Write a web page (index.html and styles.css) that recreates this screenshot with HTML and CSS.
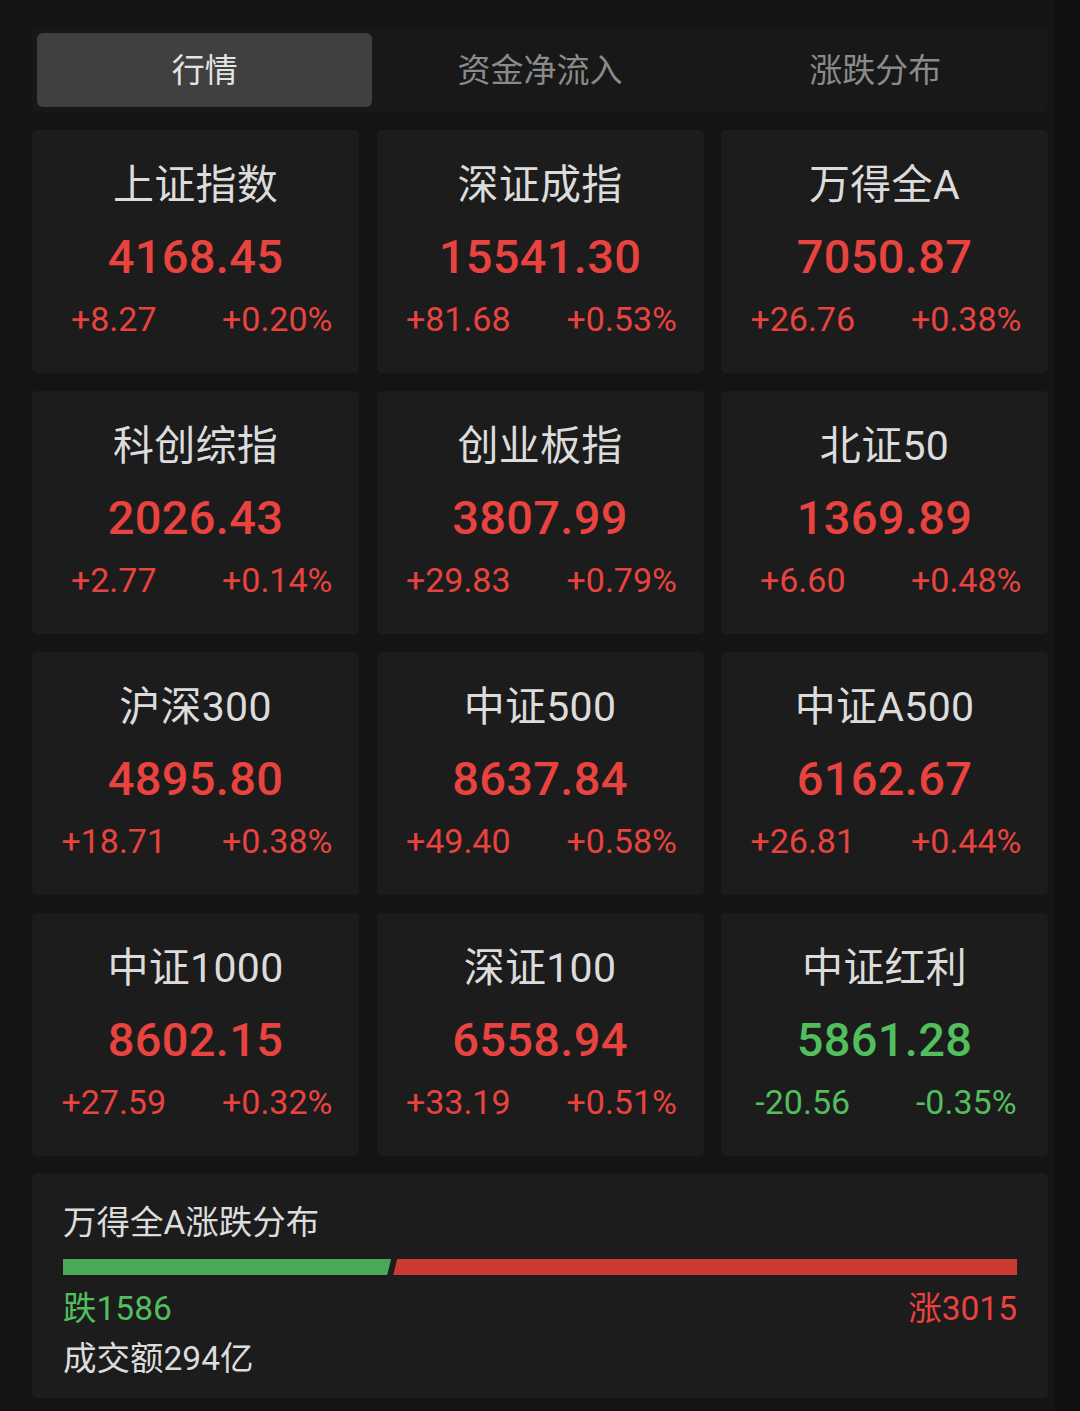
FILE: index.html
```html
<!DOCTYPE html>
<html lang="zh-CN">
<head>
<meta charset="utf-8">
<title>行情</title>
<link rel="stylesheet" href="styles.css">
</head>
<body>
<div class="page">
  <div class="tabs">
    <div class="tab active">行情</div>
    <div class="tab">资金净流入</div>
    <div class="tab">涨跌分布</div>
  </div>

  <div class="grid">
    <div class="card up">
      <div class="name">上证指数</div>
      <div class="price">4168.45</div>
      <div class="chg"><span>+8.27</span><span>+0.20%</span></div>
    </div>
    <div class="card up">
      <div class="name">深证成指</div>
      <div class="price">15541.30</div>
      <div class="chg"><span>+81.68</span><span>+0.53%</span></div>
    </div>
    <div class="card up">
      <div class="name">万得全A</div>
      <div class="price">7050.87</div>
      <div class="chg"><span>+26.76</span><span>+0.38%</span></div>
    </div>

    <div class="card up">
      <div class="name">科创综指</div>
      <div class="price">2026.43</div>
      <div class="chg"><span>+2.77</span><span>+0.14%</span></div>
    </div>
    <div class="card up">
      <div class="name">创业板指</div>
      <div class="price">3807.99</div>
      <div class="chg"><span>+29.83</span><span>+0.79%</span></div>
    </div>
    <div class="card up">
      <div class="name">北证50</div>
      <div class="price">1369.89</div>
      <div class="chg"><span>+6.60</span><span>+0.48%</span></div>
    </div>

    <div class="card up">
      <div class="name">沪深300</div>
      <div class="price">4895.80</div>
      <div class="chg"><span>+18.71</span><span>+0.38%</span></div>
    </div>
    <div class="card up">
      <div class="name">中证500</div>
      <div class="price">8637.84</div>
      <div class="chg"><span>+49.40</span><span>+0.58%</span></div>
    </div>
    <div class="card up">
      <div class="name">中证A500</div>
      <div class="price">6162.67</div>
      <div class="chg"><span>+26.81</span><span>+0.44%</span></div>
    </div>

    <div class="card up">
      <div class="name">中证1000</div>
      <div class="price">8602.15</div>
      <div class="chg"><span>+27.59</span><span>+0.32%</span></div>
    </div>
    <div class="card up">
      <div class="name">深证100</div>
      <div class="price">6558.94</div>
      <div class="chg"><span>+33.19</span><span>+0.51%</span></div>
    </div>
    <div class="card down">
      <div class="name">中证红利</div>
      <div class="price">5861.28</div>
      <div class="chg"><span>-20.56</span><span>-0.35%</span></div>
    </div>
  </div>

  <div class="dist">
    <div class="dist-title">万得全A涨跌分布</div>
    <div class="bar">
      <div class="seg seg-down" style="flex: 1586"></div>
      <div class="seg seg-up" style="flex: 3015"></div>
    </div>
    <div class="counts">
      <span class="cnt-down">跌1586</span>
      <span class="cnt-up">涨3015</span>
    </div>
    <div class="volume">成交额294亿</div>
  </div>
</div>
</body>
</html>
```

FILE: styles.css
```css
* {
  box-sizing: border-box;
}

html, body {
  margin: 0;
  padding: 0;
  background: #101010;
}

body {
  font-family: "Roboto", "Noto Sans CJK SC", sans-serif;
  width: 1080px;
  height: 1411px;
  overflow: hidden;
}

.page {
  width: 1055px;
  height: 1411px;
  background: #141414;
  padding: 28px 7px 0 32px;
}

/* Tabs */
.tabs {
  display: flex;
  height: 84px;
  padding: 5px;
  background: #181818;
  border-radius: 6px;
}

.tab {
  flex: 1;
  display: flex;
  align-items: center;
  justify-content: center;
  padding-bottom: 4px;
  font-size: 33px;
  color: #8a8a8a;
  border-radius: 6px;
  font-family: "Noto Sans CJK SC", sans-serif;
}

.tab.active {
  background: #404040;
  color: #e4e4e4;
}

/* Grid of index cards */
.grid {
  margin-top: 18px;
  display: grid;
  grid-template-columns: repeat(3, 1fr);
  grid-auto-rows: 243px;
  column-gap: 17.5px;
  row-gap: 18px;
}

.card {
  background: #1c1c1c;
  border-radius: 5px;
  display: flex;
  flex-direction: column;
  align-items: center;
  padding-top: 27px;
}

.name {
  font-size: 41px;
  line-height: 56px;
  color: #dcdcdc;
  letter-spacing: 0.3px;
}

.price {
  margin-top: 12px;
  font-size: 47px;
  line-height: 64px;
  font-weight: 500;
  letter-spacing: 0.3px;
}

.chg {
  margin-top: 6px;
  align-self: stretch;
  display: flex;
  font-size: 34px;
  line-height: 48px;
}

.chg span {
  flex: 1;
  text-align: center;
}

.up .price,
.up .chg {
  color: #e8433f;
}

.down .price,
.down .chg {
  color: #52be5e;
}

/* Distribution panel */
.dist {
  margin-top: 17px;
  width: 1016px;
  height: 225px;
  background: #1c1c1c;
  border-radius: 5px;
  padding: 27px 31px 14px 31px;
}

.dist-title {
  font-size: 33.5px;
  line-height: 46px;
  color: #dcdcdc;
}

.bar {
  margin-top: 13px;
  height: 16px;
  display: flex;
  gap: 2px;
}

.seg {
  height: 100%;
}

.seg-down {
  background: #4ba955;
  clip-path: polygon(0 0, 100% 0, calc(100% - 4px) 100%, 0 100%);
}

.seg-up {
  background: #cb3a33;
  clip-path: polygon(4px 0, 100% 0, 100% 100%, 0 100%);
}

.counts {
  margin-top: 9px;
  display: flex;
  justify-content: space-between;
  font-size: 33.5px;
  line-height: 50px;
}

.cnt-down {
  color: #52be5e;
}

.cnt-up {
  color: #e8433f;
}

.volume {
  font-size: 33.5px;
  line-height: 50px;
  color: #dcdcdc;
}
```
